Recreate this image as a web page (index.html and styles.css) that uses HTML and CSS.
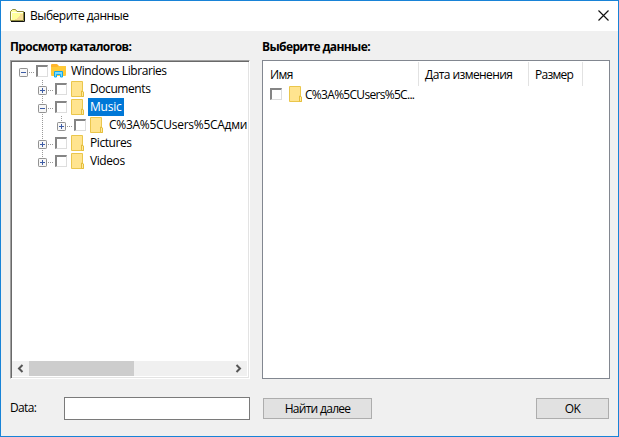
FILE: index.html
```html
<!DOCTYPE html>
<html lang="ru">
<head>
<meta charset="utf-8">
<title>Выберите данные</title>
<link rel="stylesheet" href="styles.css">
</head>
<body>
<svg class="defs" aria-hidden="true">
  <defs>
    <symbol id="folder" viewBox="0 0 14 16">
      <path d="M.5.5h11v10l1 .7v4.3H.5z" fill="#ffe48f" stroke="#eac64c"/>
      <path d="M10.5 15.5V10l2 1v4.5z" fill="#ffe99d" stroke="#e5bf3d"/>
    </symbol>
    <symbol id="minus" viewBox="0 0 9 9">
      <rect x=".5" y=".5" width="8" height="8" rx=".7" fill="#f7f7f7" stroke="#929292"/>
      <path d="M2 4.5h5" stroke="#3d5ca5"/>
    </symbol>
    <symbol id="plus" viewBox="0 0 9 9">
      <rect x=".5" y=".5" width="8" height="8" rx=".7" fill="#f7f7f7" stroke="#929292"/>
      <path d="M2 4.5h5M4.5 2v5" stroke="#3d5ca5"/>
    </symbol>
  </defs>
</svg>
<div class="window">
  <header class="titlebar">
    <svg class="app-icon" width="15" height="13" viewBox="0 0 15 13">
      <path d="M.5 11.5v-9l2-2h3l1.500 2h6.500v9z" fill="#ffff9c" stroke="#8f8b3c"/>
      <path d="M10 5h3v6H5v-1h2V9h1V8h1V7h1z" fill="#f7dc98"/>
      <path d="M1.500 10.500v-7H6l1 0h6" fill="none" stroke="#fffff0"/>
      <path d="M1 12.500h13.500V3" fill="none" stroke="#111"/>
    </svg>
    <h1 class="title">Выберите данные</h1>
    <svg class="close" width="11" height="11" viewBox="0 0 11 11"><path d="M.5.5l10 10M10.5.5l-10 10" stroke="#111" stroke-width="1.15"/></svg>
  </header>
  <main class="content">
    <section class="left">
      <h2 class="caption">Просмотр каталогов:</h2>
      <div class="tree">
        <div class="rows">
          <div class="row root">
            <svg class="toggle" width="9" height="9"><use href="#minus"/></svg><i class="dots"></i><i class="check"></i>
            <svg class="library" width="16" height="14" viewBox="0 0 16 14">
              <path d="M0 1q0-1 1-1h5l2 2h6q1 0 1 1v8H0z" fill="#ffb52b"/>
              <path d="M0 3h6l2-1h6q1 0 1 1v8q0 1-1 1H1q-1 0-1-1z" fill="#ffca38"/>
              <path d="M3.5 13V7.500h8V13h-2v-2.500h-4V13z" fill="#7cdcff" stroke="#12a9ed"/>
            </svg>
            <span class="name">Windows Libraries</span>
          </div>
          <div class="row child">
            <svg class="toggle" width="9" height="9"><use href="#plus"/></svg><i class="dots"></i><i class="check"></i>
            <svg class="folder" width="14" height="16"><use href="#folder"/></svg><span class="name">Documents</span>
          </div>
          <div class="row child">
            <svg class="toggle" width="9" height="9"><use href="#minus"/></svg><i class="dots"></i><i class="check"></i>
            <svg class="folder" width="14" height="16"><use href="#folder"/></svg><span class="name selected">Music</span>
          </div>
          <div class="row grandchild">
            <svg class="toggle" width="9" height="9"><use href="#plus"/></svg><i class="dots"></i><i class="check"></i>
            <svg class="folder" width="14" height="16"><use href="#folder"/></svg><span class="name path">C%3A%5CUsers%5CАдми</span>
          </div>
          <div class="row child">
            <svg class="toggle" width="9" height="9"><use href="#plus"/></svg><i class="dots"></i><i class="check"></i>
            <svg class="folder" width="14" height="16"><use href="#folder"/></svg><span class="name">Pictures</span>
          </div>
          <div class="row child last">
            <svg class="toggle" width="9" height="9"><use href="#plus"/></svg><i class="dots"></i><i class="check"></i>
            <svg class="folder" width="14" height="16"><use href="#folder"/></svg><span class="name">Videos</span>
          </div>
        </div>
        <div class="scrollbar">
          <svg class="arrow" width="17" height="15" viewBox="0 0 17 15"><path d="M10.5 4L7 7.5l3.5 3.5" fill="none" stroke="#555" stroke-width="2"/></svg>
          <i class="thumb"></i>
          <svg class="arrow" width="17" height="15" viewBox="0 0 17 15"><path d="M6.5 4L10 7.5 6.5 11" fill="none" stroke="#555" stroke-width="2"/></svg>
        </div>
      </div>
    </section>
    <section class="right">
      <h2 class="caption">Выберите данные:</h2>
      <div class="list">
        <div class="columns"><span class="c-name">Имя</span><span class="c-date">Дата изменения</span><span class="c-size">Размер</span></div>
        <div class="item"><i class="check"></i><svg class="folder" width="14" height="16"><use href="#folder"/></svg><span class="item-name">C%3A%5CUsers%5C...</span></div>
      </div>
    </section>
  </main>
  <footer class="footer">
    <label class="label" for="data">Data:</label>
    <input class="field" id="data" type="text">
    <button class="button find">Найти далее</button>
    <button class="button ok">OK</button>
  </footer>
</div>
</body>
</html>
```
FILE: styles.css
```css
* { box-sizing: border-box; }
body { margin: 0; font: 12px/16px "Open Sans", "Noto Sans", sans-serif; color: #000; letter-spacing: -.42px; }
.defs { position: absolute; width: 0; height: 0; }
.window { width: 619px; height: 437px; border: 1px solid #1883d7; background: #f0f0f0; display: flex; flex-direction: column; overflow: hidden; white-space: nowrap; }
.titlebar { height: 30px; flex: none; background: #fff; display: flex; align-items: center; padding: 0 9px; }
.app-icon { margin-top: -1px; }
.title { margin: 0 0 0 5px; font-size: 12px; font-weight: 400; letter-spacing: -.5px; }
.close { margin: -1px 0 0 auto; }
.content { display: flex; gap: 12px; padding: 0 8px 0 9px; height: 348px; flex: none; }
.left { width: 240px; }
.right { width: 348px; }
.caption { margin: 0; height: 29px; padding-top: 8px; font-size: 12px; font-weight: 700; letter-spacing: -.61px; }
.tree { height: 319px; border: 1px solid; border-color: #a0a0a0 #fff #fff #a0a0a0; box-shadow: inset 1px 1px #696969, inset -1px -1px #e3e3e3; padding: 1px 2px 2px 1px; background: #fff; display: flex; flex-direction: column; }
.rows { flex: 1; overflow: hidden; }
.row { display: flex; align-items: center; height: 18px; padding-left: 7px; position: relative; }
.child { padding-left: 26px; }
.grandchild { padding-left: 45px; }
.toggle { position: relative; flex: none; top: 1.5px; }
.dots { width: 6px; height: 1px; margin: 3px 1px 0; flex: none; background: repeating-linear-gradient(90deg, #999 0 1px, #fff 1px 2px); }
.check { width: 12px; height: 12px; flex: none; border: 1px solid #ddd; border-top: 2px solid #858585; border-left: 2px solid #858585; background: #fff; }
.child::before, .grandchild::before { content: ""; position: absolute; left: 30px; top: 0; width: 1px; height: 18px; background: repeating-linear-gradient(#999 0 1px, #fff 1px 2px); }
.last::before { height: 9px; }
.grandchild::after { content: ""; position: absolute; left: 49px; top: 0; width: 1px; height: 6px; background: repeating-linear-gradient(#999 0 1px, #fff 1px 2px); }
.folder { flex: none; margin-left: 4px; }
.library { flex: none; margin-left: 3px; }
.name { margin-left: 3px; padding: 0 2px; height: 18px; line-height: 18px; flex: none; }
.library + .name { margin-left: 2px; }
.selected { background: #0078d7; color: #fff; letter-spacing: -.2px; }
.path { letter-spacing: -.28px; }
.scrollbar { height: 15px; background: #f0f0f0; display: flex; flex: none; }
.scrollbar .arrow:last-child { margin-left: auto; }
.thumb { width: 105px; background: #cdcdcd; }
.list { height: 319px; border: 1px solid #828790; background: #fff; padding: 1px 0; }
.columns { height: 24px; display: flex; line-height: 25px; letter-spacing: -.58px; }
.columns span { border-right: 1px solid #e2e2e2; }
.c-name { width: 156px; padding-left: 7px; }
.c-date { width: 110px; padding-left: 6px; }
.c-size { width: 54px; padding-left: 6px; letter-spacing: -.75px; }
.item { display: flex; align-items: center; height: 16px; padding-left: 7px; }
.item .folder { margin-left: 7px; }
.item-name { margin-left: 2px; padding-top: 1px; letter-spacing: -.7px; }
.footer { display: flex; align-items: center; height: 23px; margin-top: 18px; padding: 0 9px; }
.label { width: 54px; margin-top: -2px; letter-spacing: -.65px; }
.field { width: 186px; height: 23px; border: 1px solid #7a7a7a; background: #fff; font: inherit; padding: 0 3px; margin: 0; }
.button { height: 21px; border: 1px solid #adadad; background: #e1e1e1; font: inherit; letter-spacing: -.7px; padding: 0; color: #000; }
.find { width: 109px; margin-left: 13px; }
.ok { width: 73px; margin-left: auto; }
```
